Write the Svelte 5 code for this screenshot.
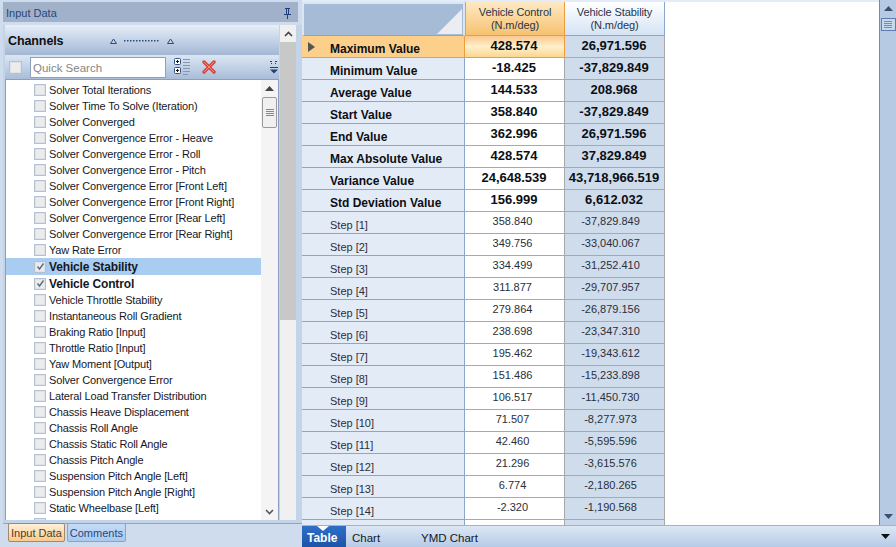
<script>
	const channels = [
		'Solver Total Iterations',
		'Solver Time To Solve (Iteration)',
		'Solver Converged',
		'Solver Convergence Error - Heave',
		'Solver Convergence Error - Roll',
		'Solver Convergence Error - Pitch',
		'Solver Convergence Error [Front Left]',
		'Solver Convergence Error [Front Right]',
		'Solver Convergence Error [Rear Left]',
		'Solver Convergence Error [Rear Right]',
		'Yaw Rate Error',
		'Vehicle Stability',
		'Vehicle Control',
		'Vehicle Throttle Stability',
		'Instantaneous Roll Gradient',
		'Braking Ratio [Input]',
		'Throttle Ratio [Input]',
		'Yaw Moment [Output]',
		'Solver Convergence Error',
		'Lateral Load Transfer Distribution',
		'Chassis Heave Displacement',
		'Chassis Roll Angle',
		'Chassis Static Roll Angle',
		'Chassis Pitch Angle',
		'Suspension Pitch Angle [Left]',
		'Suspension Pitch Angle [Right]',
		'Static Wheelbase [Left]',
		'Static Wheelbase [Right]'
	];
	const checked = ['Vehicle Stability', 'Vehicle Control'];

	const summary = [
		['Maximum Value', '428.574', '26,971.596'],
		['Minimum Value', '-18.425', '-37,829.849'],
		['Average Value', '144.533', '208.968'],
		['Start Value', '358.840', '-37,829.849'],
		['End Value', '362.996', '26,971.596'],
		['Max Absolute Value', '428.574', '37,829.849'],
		['Variance Value', '24,648.539', '43,718,966.519'],
		['Std Deviation Value', '156.999', '6,612.032']
	];
	const steps = [
		['358.840', '-37,829.849'],
		['349.756', '-33,040.067'],
		['334.499', '-31,252.410'],
		['311.877', '-29,707.957'],
		['279.864', '-26,879.156'],
		['238.698', '-23,347.310'],
		['195.462', '-19,343.612'],
		['151.486', '-15,233.898'],
		['106.517', '-11,450.730'],
		['71.507', '-8,277.973'],
		['42.460', '-5,595.596'],
		['21.296', '-3,615.576'],
		['6.774', '-2,180.265'],
		['-2.320', '-1,190.568'],
		['-6.848', '-596.446']
	];
</script>

<div class="app">
	<aside class="left">
		<div class="title">
			<span>Input Data</span>
			<svg class="pin" width="9" height="11" viewBox="0 0 9 11"><path d="M2 0h5v1H6v5h2v1H5v4H4V7H1V6h2V1H2z M4 1v5h1V1z" fill="#1f3f7f" fill-rule="evenodd"/></svg>
		</div>
		<div class="panel">
			<div class="panel-main">
				<div class="channels-head">
					<b>Channels</b>
					<svg class="grip" width="65" height="6" viewBox="0 0 65 6">
						<path d="M0.500 5.500 L3.500 1 L6.500 5.500z M57.500 5.500 L60.500 1 L63.500 5.500z" fill="#c5d3e8" stroke="#2d4a80" stroke-width="1"/>
						<path d="M14 2h1.500v1.500H14z M17 2h1.500v1.500H17z M20 2h1.500v1.500H20z M23 2h1.500v1.500H23z M26 2h1.500v1.500H26z M29 2h1.500v1.500H29z M32 2h1.500v1.500H32z M35 2h1.500v1.500H35z M38 2h1.500v1.500H38z M41 2h1.500v1.500H41z M44 2h1.500v1.500H44z M47 2h1.500v1.500H47z" fill="#2d4a80"/>
					</svg>
				</div>
				<div class="toolbar">
					<span class="box big"></span>
					<div class="search">Quick Search</div>
					<svg class="tree-icon" width="18" height="18" viewBox="0 0 18 18">
						<rect x="0.500" y="0.500" width="6" height="6" rx="1" fill="#fff" stroke="#33507f"/>
						<rect x="0.500" y="9.500" width="6" height="6" rx="1" fill="#fff" stroke="#33507f"/>
						<path d="M2 3.500h3M3.500 2v3M2 12.500h3M3.500 11v3" stroke="#111"/>
						<path d="M9 1.500h7M9 4.500h7M9 7.500h7M9 10.500h7M9 13.500h7M9 16.500h5" stroke="#8796ab"/>
					</svg>
					<svg class="cross" width="14" height="14" viewBox="0 0 14 14">
						<path d="M2 2 L12 12 M12 2 L2 12" stroke="#d8453c" stroke-width="3.400" stroke-linecap="round"/>
						<path d="M2 2 L12 12 M12 2 L2 12" stroke="#f08a7a" stroke-width="1"/>
					</svg>
					<div class="overflow">
						<svg width="8" height="14" viewBox="0 0 8 14">
							<path d="M0 1.500h2M5 1.500h2M1 3.500h1M5 3.500h1" stroke="#23406f"/>
							<path d="M0 7.500h8" stroke="#23406f"/>
							<path d="M0 9.500h8l-4 4z" fill="#23406f"/>
						</svg>
					</div>
				</div>
				<div class="list-wrap">
					<div class="list">
						{#each channels as name}
							<div class="item" class:selected={name === 'Vehicle Stability'} class:bold={checked.includes(name)}>
								<span class="box">
									{#if checked.includes(name)}
										<svg width="9" height="9" viewBox="0 0 9 9"><path d="M1.500 4.500 L3.500 7 L7.500 1.500" fill="none" stroke="#5d6b80" stroke-width="1.400"/></svg>
									{/if}
								</span>
								<span>{name}</span>
							</div>
						{/each}
					</div>
					<div class="list-scroll">
						<div class="arrow"><svg width="9" height="5" viewBox="0 0 9 5"><path d="M4.500 0L9 5H0z" fill="#444"/></svg></div>
						<div class="list-thumb"><i></i><i></i><i></i><i></i></div>
						<div class="spacer"></div>
						<div class="arrow"><svg width="9" height="6" viewBox="0 0 9 6"><path d="M1 1l3.500 3.500L8 1" fill="none" stroke="#555" stroke-width="1.600"/></svg></div>
					</div>
				</div>
			</div>
			<div class="outer-scroll">
				<div class="arrow top"><svg width="9" height="6" viewBox="0 0 9 6"><path d="M1 5l3.500-3.500L8 5" fill="none" stroke="#444" stroke-width="1.600"/></svg></div>
				<div class="outer-thumb"></div>
				<div class="spacer"></div>
			</div>
		</div>
		<div class="left-tabs">
			<span class="tab active">Input Data</span>
			<span class="tab">Comments</span>
		</div>
	</aside>

	<main class="right">
		<div class="grid-area">
			<div class="table-wrap">
				<table>
					<thead>
						<tr>
							<th class="corner"><span class="tri"></span></th>
							<th class="col sel">Vehicle Control<br />(N.m/deg)</th>
							<th class="col">Vehicle Stability<br />(N.m/deg)</th>
						</tr>
					</thead>
					<tbody>
						{#each summary as row, i}
							<tr class="bold" class:current={i === 0}>
								<td class="label">
									{#if i === 0}<span class="marker"></span>{/if}
									{row[0]}
								</td>
								<td class="v1"><span>{row[1]}</span></td>
								<td class="v2"><span>{row[2]}</span></td>
							</tr>
						{/each}
						{#each steps as row, i}
							<tr>
								<td class="label">Step [{i + 1}]</td>
								<td class="v1"><span>{row[0]}</span></td>
								<td class="v2"><span>{row[1]}</span></td>
							</tr>
						{/each}
					</tbody>
				</table>
			</div>
			<div class="main-scroll">
				<div class="arrow"><svg width="9" height="5" viewBox="0 0 9 5"><path d="M4.500 0L9 5H0z" fill="#3d4f70"/></svg></div>
				<div class="main-thumb"><i></i><i></i><i></i><i></i></div>
				<div class="spacer"></div>
				<div class="arrow"><svg width="9" height="5" viewBox="0 0 9 5"><path d="M0 0h9L4.500 5z" fill="#3d4f70"/></svg></div>
			</div>
		</div>
		<div class="view-tabs">
			<span class="view-tab on">Table</span>
			<span class="view-tab">Chart</span>
			<span class="view-tab">YMD Chart</span>
			<svg class="menu" width="9" height="5" viewBox="0 0 9 5"><path d="M0 0h9L4.500 5z" fill="#111"/></svg>
		</div>
	</main>
</div>

<style>
	:global(body) {
		margin: 0;
		background: #cfdcee;
	}
	.app {
		display: flex;
		width: 896px;
		height: 547px;
		overflow: hidden;
		font-family: 'Liberation Sans', Arial, sans-serif;
		font-size: 11px;
		color: #15181f;
		background: #cfdcee;
	}
	.left {
		width: 302px;
		flex: none;
		display: flex;
		flex-direction: column;
		padding: 2px 0 0 3px;
		box-sizing: border-box;
	}
	.title {
		height: 20px;
		flex: none;
		display: flex;
		align-items: center;
		justify-content: space-between;
		margin-right: 4px;
		padding: 2px 6px 0 3px;
		box-sizing: border-box;
		background: #a0b1c9;
		color: #27477f;
	}
	.panel {
		flex: none;
		height: 499px;
		box-sizing: border-box;
		margin-top: 3px;
		display: flex;
		padding: 0 0 3px 2px;
		gap: 1px;
		background: #c3d3e8;
		border-bottom: 1px solid #90a5bf;
	}
	.panel-main {
		width: 274px;
		flex: none;
		display: flex;
		flex-direction: column;
	}
	.channels-head {
		height: 30px;
		flex: none;
		display: flex;
		align-items: center;
		box-sizing: border-box;
		padding: 1px 0 0 3px;
		background: linear-gradient(#e6eef9, #a3b7d4);
	}
	.channels-head b {
		font-size: 12.500px;
		letter-spacing: -0.1px;
		color: #0c0f14;
		width: 102px;
	}
	.toolbar {
		height: 24px;
		flex: none;
		display: flex;
		align-items: center;
		background: linear-gradient(#dbe6f4, #a9bdd9);
		border-bottom: 1px solid #8a9fbd;
		position: relative;
	}
	.box {
		width: 12px;
		height: 12px;
		flex: none;
		box-sizing: border-box;
		border: 1px solid #b4c1d1;
		background: #ececec;
		box-shadow: inset 0 0 0 1px #dfe3e9;
		display: flex;
		align-items: center;
		justify-content: center;
	}
	.box.big {
		width: 13px;
		height: 13px;
		margin: 0 8px 0 4px;
	}
	.search {
		width: 136px;
		height: 21px;
		box-sizing: border-box;
		border: 1px solid #8ea2bf;
		background: #fff;
		color: #868686;
		font-size: 11.500px;
		line-height: 20px;
		padding-left: 2px;
	}
	.tree-icon {
		margin-left: 8px;
	}
	.cross {
		margin-left: 10px;
	}
	.overflow {
		position: absolute;
		right: 0;
		top: 0;
		bottom: 0;
		width: 10px;
		display: flex;
		align-items: center;
		justify-content: center;
	}
	.list-wrap {
		flex: 1;
		min-height: 0;
		display: flex;
		background: #fff;
		border: 1px solid #8a9fbd;
		border-top: 0;
		border-bottom: 0;
		overflow: hidden;
	}
	.list {
		flex: 1;
		min-width: 0;
		padding-top: 2px;
		overflow: hidden;
	}
	.item {
		height: 16px;
		display: flex;
		align-items: center;
		padding-left: 28px;
		gap: 3px;
		white-space: nowrap;
		letter-spacing: -0.15px;
	}
	.item.selected {
		background: #a9cdf0;
	}
	.item.bold {
		height: 17px;
		font-weight: 700;
		font-size: 12px;
	}
	.list-scroll {
		width: 17px;
		flex: none;
		display: flex;
		flex-direction: column;
		align-items: center;
		background: #f4f4f4;
	}
	.arrow {
		height: 17px;
		flex: none;
		display: flex;
		align-items: center;
		justify-content: center;
	}
	.spacer {
		flex: 1;
	}
	.list-thumb {
		width: 15px;
		height: 31px;
		box-sizing: border-box;
		border: 1px solid #9a9a9a;
		border-radius: 2px;
		background: #f0f0f0;
		display: flex;
		flex-direction: column;
		align-items: center;
		justify-content: center;
		gap: 1px;
	}
	.list-thumb i,
	.main-thumb i {
		display: block;
		width: 8px;
		height: 1px;
		background: #888;
	}
	.outer-scroll {
		width: 16px;
		flex: none;
		display: flex;
		flex-direction: column;
		background: #f0f0f0;
	}
	.outer-thumb {
		height: 278px;
		background: #c8c8c8;
	}
	.left-tabs {
		flex: 1;
		display: flex;
		align-items: flex-start;
		gap: 2px;
		margin-top: -1px;
		padding-left: 5px;
	}
	.tab {
		height: 17px;
		line-height: 18px;
		padding: 0 2px 0 2px;
		border: 1px solid #8ba3c6;
		border-radius: 2px;
		background: linear-gradient(#c6dbf6, #a8c9f0);
		color: #27477f;
	}
	.tab.active {
		background: linear-gradient(#fff0d8, #fbc98a);
		color: #4a4030;
		border-color: #a08a6a;
	}
	.right {
		flex: 1;
		min-width: 0;
		display: flex;
		flex-direction: column;
	}
	.grid-area {
		height: 525px;
		flex: none;
		display: flex;
	}
	.table-wrap {
		flex: 1;
		background: #fff;
		overflow: hidden;
		border-top: 2px solid #e3ecf8;
	}
	table {
		border-collapse: separate;
		border-spacing: 0;
		table-layout: fixed;
		width: 363px;
	}
	th {
		height: 34px;
		padding: 0;
		box-sizing: border-box;
		font-weight: 400;
		font-size: 11px;
		line-height: 13px;
		letter-spacing: -0.1px;
		color: #29344a;
	}
	.corner {
		width: 163px;
		background: #a6bbd5;
		border: 2px solid #dce6f3;
		border-bottom: 1px solid #8ca6c8;
		position: relative;
	}
	.tri {
		position: absolute;
		right: 1px;
		bottom: 1px;
		width: 0;
		height: 0;
		border-style: solid;
		border-width: 0 0 25px 25px;
		border-color: transparent transparent #eaeef3 transparent;
	}
	.col {
		width: 100px;
		background: linear-gradient(#fff, #d5e3f5);
		border-bottom: 1px solid #8ca6c8;
		border-right: 1px solid #8ca6c8;
	}
	.col.sel {
		background: linear-gradient(#fde9c4, #f7c26f);
		border-bottom: 1px solid #ee9c3c;
		border-right: 1px solid #ee9c3c;
		border-left: 1px solid #ee9c3c;
	}
	td {
		height: 22px;
		padding: 0;
		box-sizing: border-box;
		overflow: hidden;
		white-space: nowrap;
	}
	.label {
		background: #e3ebf7;
		border-bottom: 1px solid #8ca6c8;
		border-right: 1px solid #8ca6c8;
		padding: 5px 0 0 28px;
		color: #2a2f3a;
		position: relative;
	}
	.v1,
	.v2 {
		text-align: center;
		vertical-align: top;
		border-bottom: 1px solid #a9a9a9;
		border-right: 1px solid #a9a9a9;
		line-height: 19px;
		padding-right: 4px;
		color: #2a2f3a;
	}
	.v1 {
		background: #fff;
	}
	.v2 {
		background: #cfdcec;
		padding-right: 8px;
	}
	.bold td {
		font-weight: 700;
		font-size: 12px;
		color: #0c0f14;
	}
	.bold .v1,
	.bold .v2 {
		font-size: 13px;
		padding-right: 1px;
	}
	.current .label {
		background: #fcd08a;
		border-color: #ee9c3c;
	}
	.current .v1 {
		background: linear-gradient(#f9c994, #ffe2b4 35%, #fff0ce 50%, #fcd68e 100%);
		border-color: #ee9c3c;
	}
	.current .v2 {
		border-bottom-color: #ee9c3c;
	}
	.marker {
		position: absolute;
		left: 6px;
		top: 6px;
		width: 0;
		height: 0;
		border-style: solid;
		border-width: 5px 0 5px 7px;
		border-color: transparent transparent transparent #555;
	}
	.main-scroll {
		width: 17px;
		flex: none;
		display: flex;
		flex-direction: column;
		align-items: center;
		box-sizing: border-box;
		border-left: 1px solid #6f8bad;
		background: #b6cbe3;
	}
	.main-thumb {
		width: 15px;
		height: 13px;
		box-sizing: border-box;
		margin-top: 1px;
		border: 1px solid #5d7cab;
		background: #c6d8ec;
		display: flex;
		flex-direction: column;
		align-items: center;
		justify-content: center;
		gap: 1px;
	}
	.view-tabs {
		flex: 1;
		min-height: 0;
		display: flex;
		align-items: stretch;
		background: linear-gradient(#dce7f5, #b6cbe6);
		border-top: 1px solid #a3b2c4;
		position: relative;
		font-size: 11.500px;
		white-space: nowrap;
	}
	.view-tab {
		display: flex;
		align-items: center;
		padding: 2px 0 0 6px;
		width: 69px;
		box-sizing: border-box;
	}
	.view-tab.on {
		width: 44px;
		padding-left: 5px;
		background: linear-gradient(#2f6fc8, #1b54a8);
		color: #fff;
		font-size: 12px;
		font-weight: 700;
		position: relative;
	}
	.view-tab.on::before {
		content: '';
		position: absolute;
		top: 0;
		left: 15px;
		border-style: solid;
		border-width: 5px 6px 0 6px;
		border-color: #fff transparent transparent transparent;
	}
	.menu {
		position: absolute;
		right: 6px;
		top: 8px;
	}
</style>
